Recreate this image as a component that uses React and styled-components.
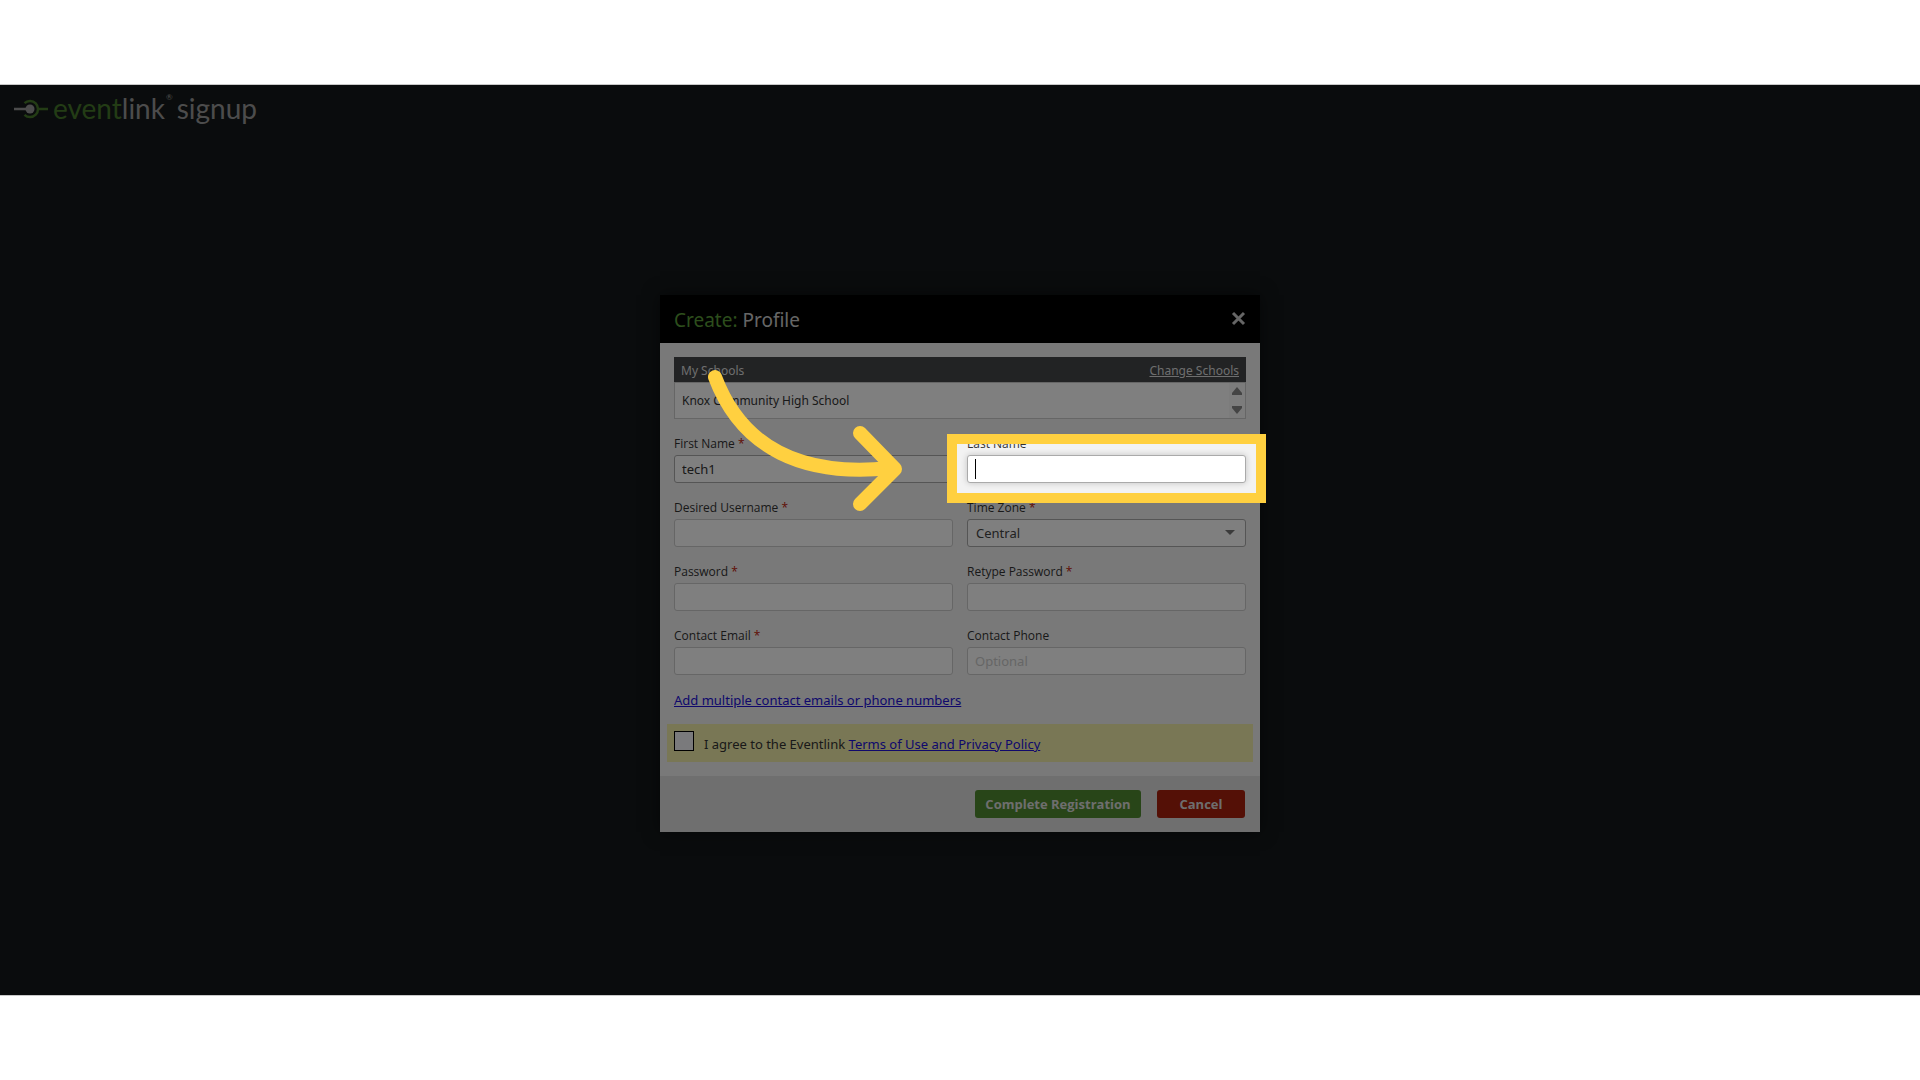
import React, { useState } from "react";
import styled, { createGlobalStyle } from "styled-components";

const GlobalStyle = createGlobalStyle`
  * {
    box-sizing: border-box;
  }
  body {
    margin: 0;
    background-color: #fff;
    font-family: "Noto Sans", "Open Sans", sans-serif;
    font-size: 13px;
    color: #333;
  }
`;

const Page = styled.div`
  display: flex;
  flex-direction: column;
  min-height: 100vh;
  padding: 84px 0;
`;
// clips the dimmed area that the spotlight spreads around itself
const Stage = styled.div`
  flex: 1;
  display: flex;
  flex-direction: column;
  overflow: hidden;
  background-color: #14181a;
  border-top: 1px solid #c8c8c8;
  border-bottom: 1px solid #c8c8c8;
`;
const TopBar = styled.header`
  display: flex;
  align-items: center;
  height: 47px;
  padding: 0 14px;
`;
const Logo = styled.div`
  display: flex;
  align-items: center;
  font-family: Lato, sans-serif;
  font-size: 28px;
  line-height: 47px;
  color: #999;
`;
const LogoMark = styled.svg`
  width: 34px;
  height: 20px;
  margin-right: 5px;
`;
const LogoGreen = styled.span`
  color: #46782a;
`;
const LogoReg = styled.sup`
  align-self: flex-start;
  margin: 6px 4px 0 1px;
  font-size: 8px;
  line-height: 12px;
`;
const Main = styled.main`
  flex: 1;
  display: flex;
  align-items: center;
  justify-content: center;
`;
const Dialog = styled.form`
  position: relative;
  width: 600px;
  background-color: #f2f2f2;
  box-shadow: 0 0 16px rgba(0, 0, 0, 0.5);
`;
const DialogHeader = styled.div`
  display: flex;
  align-items: center;
  justify-content: space-between;
  height: 48px;
  padding: 2px 14px 0;
  background-color: #000;
`;
const Title = styled.h1`
  margin: 0;
  font-size: 19px;
  font-weight: 400;
  color: #ccc;
`;
const TitleGreen = styled.span`
  color: #5a9c38;
`;
const CloseButton = styled.button`
  display: flex;
  padding: 0 0 4px;
  border: none;
  background: none;
  color: #ccc;
  cursor: pointer;
`;
const DialogBody = styled.div`
  padding: 14px;
`;
const ListHeader = styled.div`
  display: flex;
  align-items: center;
  justify-content: space-between;
  height: 25px;
  padding: 2px 7px 0;
  background-color: #444649;
  font-size: 12px;
  color: #ddd;
`;
const HeaderLink = styled.a`
  color: #ddd;
`;
const List = styled.div`
  display: flex;
  align-items: center;
  justify-content: space-between;
  height: 37px;
  padding-left: 7px;
  background-color: #fff;
  border: 1px solid #ccc;
  font-size: 12px;
`;
const ScrollBar = styled.div`
  display: flex;
  flex-direction: column;
  align-items: center;
  justify-content: space-between;
  width: 16px;
  height: 100%;
  padding: 4px 0;
  background-color: #f8f8f8;
`;
const Fields = styled.div`
  display: grid;
  grid-template-columns: 1fr 1fr;
  gap: 17px 14px;
  margin-top: 17px;
`;
const Field = styled.div`
  position: relative;
`;
const Label = styled.label`
  display: block;
  margin-bottom: 3px;
  font-family: "Open Sans", "Noto Sans", sans-serif;
  font-size: 12px;
  line-height: 16px;
`;
const Required = styled.span`
  color: #c01808;
`;
const Input = styled.input`
  display: block;
  width: 100%;
  height: 28px;
  padding: 0 7px;
  border: 1px solid ${({ $dark }) => ($dark ? "#aaa" : "#ccc")};
  border-radius: 3px;
  outline: none;
  background-color: #fff;
  box-shadow: ${({ $glow }) => ($glow ? "0 0 6px rgba(0, 0, 0, 0.2)" : "none")};
  font: inherit;
  color: #333;
  &::placeholder {
    color: #ccc;
  }
`;
const Select = styled.select`
  display: block;
  width: 100%;
  height: 28px;
  padding: 0 8px;
  border: 1px solid #aaa;
  border-radius: 3px;
  appearance: none;
  background-color: #fff;
  font: inherit;
  color: #444;
`;
const SelectArrow = styled.svg`
  position: absolute;
  right: 11px;
  bottom: 12px;
  width: 10px;
  height: 5px;
  pointer-events: none;
`;
const Caret = styled.span`
  position: absolute;
  left: 8px;
  bottom: 4px;
  width: 1px;
  height: 20px;
  background-color: #000;
`;
const Spotlight = styled.div`
  position: absolute;
  top: -2px;
  right: -20px;
  bottom: -20px;
  left: -20px;
  z-index: 1;
  border: 10px solid #ffd040;
  box-shadow: 0 0 0 4000px rgba(0, 0, 0, 0.5);
  pointer-events: none;
`;
const Arrow = styled.svg`
  position: absolute;
  top: 70px;
  left: 40px;
  z-index: 2;
  width: 210px;
  height: 150px;
  pointer-events: none;
`;
const MoreLine = styled.div`
  margin: 16px 0 15px;
  line-height: 18px;
`;
const Link = styled.a`
  color: #2010d8;
`;
const Agree = styled.div`
  display: flex;
  align-items: flex-start;
  height: 38px;
  margin: 0 -7px;
  padding: 7px;
  background-color: #f2eeaa;
`;
const Checkbox = styled.input`
  width: 20px;
  height: 20px;
  margin: 0 10px 0 0;
  border: 1px solid #000;
  appearance: none;
  background-color: #f4f4f8;
`;
const AgreeText = styled.label`
  padding-top: 4px;
  line-height: 18px;
`;
const DialogFooter = styled.div`
  display: flex;
  justify-content: flex-end;
  gap: 16px;
  padding: 14px 15px;
  background-color: #dedede;
`;
const Button = styled.button`
  height: 28px;
  padding: 0;
  width: ${({ $width }) => $width}px;
  border: none;
  border-radius: 3px;
  background-color: ${({ $color }) => $color};
  font: inherit;
  font-family: "Open Sans", "Noto Sans", sans-serif;
  font-weight: 700;
  color: #ddd;
  cursor: pointer;
`;

const TextField = ({ id, label, required, children, ...rest }) => (
  <Field>
    <Label htmlFor={id}>
      {label} {required && <Required>*</Required>}
    </Label>
    <Input id={id} {...rest} />
    {children}
  </Field>
);

const App = () => {
  const [firstName, setFirstName] = useState("tech1");
  const [agreed, setAgreed] = useState(false);

  return (
    <>
      <GlobalStyle />
      <Page>
        <Stage>
          <TopBar>
            <Logo>
              <LogoMark viewBox="0 0 34 20" fill="none">
                <path d="M10.5 4.2 A8 8 0 1 1 10.5 15.8" stroke="#46782a" strokeWidth="2.5" />
                <path d="M24 10 H34" stroke="#46782a" strokeWidth="2.5" />
                <path d="M0 10 H14" stroke="#999" strokeWidth="2.5" />
                <circle cx="16" cy="10" r="4.5" fill="#999" />
              </LogoMark>
              <LogoGreen>event</LogoGreen>link
              <LogoReg>®</LogoReg>
              <span>signup</span>
            </Logo>
          </TopBar>
          <Main>
            <Dialog onSubmit={(e) => e.preventDefault()}>
              <DialogHeader>
                <Title>
                  <TitleGreen>Create:</TitleGreen> Profile
                </Title>
                <CloseButton type="button" aria-label="Close">
                  <svg width="15" height="15" viewBox="0 0 15 15">
                    <path
                      d="M2 2 L13 13 M13 2 L2 13"
                      stroke="currentColor"
                      strokeWidth="3"
                    />
                  </svg>
                </CloseButton>
              </DialogHeader>
              <DialogBody>
                <ListHeader>
                  <span>My Schools</span>
                  <HeaderLink href="#schools">Change Schools</HeaderLink>
                </ListHeader>
                <List>
                  <span>Knox Community High School</span>
                  <ScrollBar>
                    <svg width="10" height="8" viewBox="0 0 10 8">
                      <path d="M5 0 L10 6 V8 H0 V6 Z" fill="#888" />
                    </svg>
                    <svg width="10" height="8" viewBox="0 0 10 8">
                      <path d="M5 8 L10 2 V0 H0 V2 Z" fill="#888" />
                    </svg>
                  </ScrollBar>
                </List>
                <Fields>
                  <TextField
                    id="first"
                    label="First Name"
                    required
                    $dark
                    value={firstName}
                    onChange={(e) => setFirstName(e.target.value)}
                  />
                  <TextField id="last" label="Last Name" $dark $glow>
                    <Caret />
                    <Spotlight />
                  </TextField>
                  <TextField id="username" label="Desired Username" required />
                  <Field>
                    <Label htmlFor="zone">
                      Time Zone <Required>*</Required>
                    </Label>
                    <Select id="zone" defaultValue="Central">
                      <option>Eastern</option>
                      <option>Central</option>
                      <option>Mountain</option>
                      <option>Pacific</option>
                    </Select>
                    <SelectArrow viewBox="0 0 10 5">
                      <path d="M0 0 H10 L5 5 Z" fill="#777" />
                    </SelectArrow>
                  </Field>
                  <TextField id="password" type="password" label="Password" required />
                  <TextField id="retype" type="password" label="Retype Password" required />
                  <TextField id="email" type="email" label="Contact Email" required />
                  <TextField id="phone" type="tel" label="Contact Phone" placeholder="Optional" />
                </Fields>
                <MoreLine>
                  <Link href="#contacts">Add multiple contact emails or phone numbers</Link>
                </MoreLine>
                <Agree>
                  <Checkbox
                    id="agree"
                    type="checkbox"
                    checked={agreed}
                    onChange={(e) => setAgreed(e.target.checked)}
                  />
                  <AgreeText htmlFor="agree">
                    I agree to the Eventlink{" "}
                    <Link href="#terms">Terms of Use and Privacy Policy</Link>
                  </AgreeText>
                </Agree>
              </DialogBody>
              <DialogFooter>
                <Button type="submit" $width={166} $color="#508a30">
                  Complete Registration
                </Button>
                <Button type="button" $width={88} $color="#a8200c">
                  Cancel
                </Button>
              </DialogFooter>
              <Arrow
                viewBox="0 0 210 150"
                fill="none"
                stroke="#ffd040"
                strokeWidth="14"
                strokeLinecap="round"
                strokeLinejoin="round"
              >
                <path d="M15 12 C42 84 104 112 190 103" />
                <path d="M160 68 L195 104 L160 139" />
              </Arrow>
            </Dialog>
          </Main>
        </Stage>
      </Page>
    </>
  );
};

export default App;
